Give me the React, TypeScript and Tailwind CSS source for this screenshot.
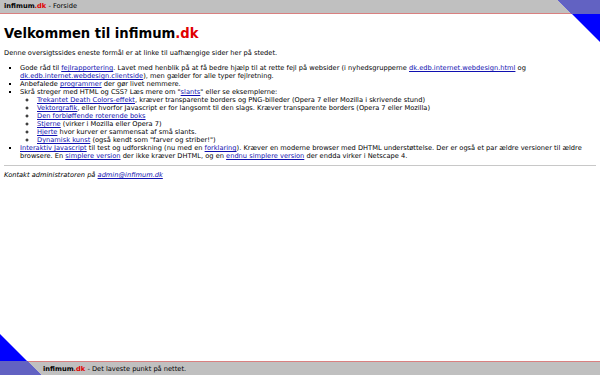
import React from 'react';

function A({ children }: { children: React.ReactNode }) {
    return <a href="#" className="text-[#1010b0] underline">{children}</a>;
}

function Logo() {
    return (
        <span className="font-bold">
            infimum<span className="text-[#e00000]">.dk</span>
        </span>
    );
}

export default function App() {
    return (
        <div className="relative flex h-[375px] w-[600px] flex-col overflow-hidden bg-white font-['DejaVu_Sans',sans-serif] text-[6.66px] leading-[8px] text-black">
            {/* Top bar */}
            <div className="flex h-[14px] shrink-0 items-center border-b border-[#d98080] bg-[#c0c0c0] px-[4px] pb-[1px]">
                <Logo />
                <span>&nbsp;- Forside</span>
            </div>

            <div className="flex-1 px-[4px]">
                <h1 className="mt-[12px] text-[13.2px] font-bold leading-[16px]">
                    Velkommen til infimum<span className="text-[#e00000]">.dk</span>
                </h1>

                <p className="mt-[7px]">Denne oversigtssides eneste formål er at linke til uafhængige sider her på stedet.</p>

                <ul className="mt-[7px] list-[square] pl-[16px]">
                    <li>
                        Gode råd til <A>fejlrapportering</A>. Lavet med henblik på at få bedre hjælp til at rette fejl på websider (i nyhedsgrupperne{' '}
                        <A>dk.edb.internet.webdesign.html</A> og <A>dk.edb.internet.webdesign.clientside</A>), men gælder for alle typer fejlretning.
                    </li>
                    <li>
                        Anbefalede <A>programmer</A> der gør livet nemmere.
                    </li>
                    <li>
                        Skrå streger med HTML og CSS? Læs mere om "<A>slants</A>" eller se eksemplerne:
                        <ul className="list-[circle] pl-[17px]">
                            <li><A>Trekantet Death Colors-effekt</A>, kræver transparente borders og PNG-billeder (Opera 7 eller Mozilla i skrivende stund)</li>
                            <li><A>Vektorgrafik</A>, eller hvorfor Javascript er for langsomt til den slags. Kræver transparente borders (Opera 7 eller Mozilla)</li>
                            <li><A>Den forbløffende roterende boks</A></li>
                            <li><A>Stjerne</A> (virker i Mozilla eller Opera 7)</li>
                            <li><A>Hjerte</A> hvor kurver er sammensat af små slants.</li>
                            <li><A>Dynamisk kunst</A> (også kendt som "farver og striber!")</li>
                        </ul>
                    </li>
                    <li>
                        <A>Interaktiv Javascript</A> til test og udforskning (nu med en <A>forklaring</A>). Kræver en moderne browser med DHTML understøttelse. Der er også et par ældre versioner til ældre
                        browsere. En <A>simplere version</A> der ikke kræver DHTML, og en <A>endnu simplere version</A> der endda virker i Netscape 4.
                    </li>
                </ul>

                <hr className="mt-[5px] border-t border-[#c8c8c8]" />

                <p className="mt-[5px] italic">
                    Kontakt administratoren på <A>admin@infimum.dk</A>
                </p>
            </div>

            {/* Bottom bar */}
            <div className="flex h-[14px] shrink-0 items-center border-t border-[#d98080] bg-[#c0c0c0] pl-[43px]">
                <Logo />
                <span>&nbsp;- Det laveste punkt på nettet.</span>
            </div>

            {/* Corner slants */}
            <svg className="absolute right-0 top-0" width="42" height="42" viewBox="0 0 42 42">
                <polygon points="0,0 42,0 42,42" fill="#0000ff" />
                <polygon points="0,0 42,0 42,14 14,14" fill="#6262c2" />
            </svg>
            <svg className="absolute bottom-0 left-0" width="41" height="41" viewBox="0 0 41 41">
                <polygon points="0,0 0,41 41,41" fill="#0000ff" />
                <polygon points="0,27 27,27 41,41 0,41" fill="#6262c2" />
            </svg>
        </div>
    );
}
